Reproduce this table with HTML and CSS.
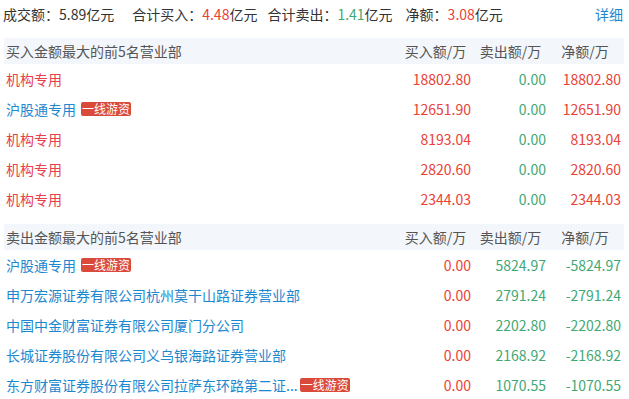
FILE: index.html
```html
<!DOCTYPE html>
<html lang="zh-CN">
<head>
<meta charset="utf-8">
<link rel="stylesheet" href="styles.css">
</head>
<body>
<div class="wrap">
  <div class="summary">
    <span class="item">成交额：5.89亿元</span>
    <span class="item">合计买入：<em class="up">4.48</em>亿元</span>
    <span class="item">合计卖出：<em class="down">1.41</em>亿元</span>
    <span class="item">净额：<em class="up">3.08</em>亿元</span>
    <a class="more">详细</a>
  </div>

  <table class="lhb">
    <colgroup><col><col class="c-num"><col class="c-num"><col class="c-net"></colgroup>
    <thead>
      <tr><th class="t-name">买入金额最大的前5名营业部</th><th>买入额/万</th><th>卖出额/万</th><th class="t-net">净额/万</th></tr>
    </thead>
    <tbody>
      <tr><td class="name inst">机构专用</td><td class="up">18802.80</td><td class="down">0.00</td><td class="up">18802.80</td></tr>
      <tr><td class="name"><span class="link">沪股通专用</span><span class="tag">一线游资</span></td><td class="up">12651.90</td><td class="down">0.00</td><td class="up">12651.90</td></tr>
      <tr><td class="name inst">机构专用</td><td class="up">8193.04</td><td class="down">0.00</td><td class="up">8193.04</td></tr>
      <tr><td class="name inst">机构专用</td><td class="up">2820.60</td><td class="down">0.00</td><td class="up">2820.60</td></tr>
      <tr><td class="name inst">机构专用</td><td class="up">2344.03</td><td class="down">0.00</td><td class="up">2344.03</td></tr>
    </tbody>
  </table>

  <table class="lhb second">
    <colgroup><col><col class="c-num"><col class="c-num"><col class="c-net"></colgroup>
    <thead>
      <tr><th class="t-name">卖出金额最大的前5名营业部</th><th>买入额/万</th><th>卖出额/万</th><th class="t-net">净额/万</th></tr>
    </thead>
    <tbody>
      <tr><td class="name"><span class="link">沪股通专用</span><span class="tag">一线游资</span></td><td class="up">0.00</td><td class="down">5824.97</td><td class="down">-5824.97</td></tr>
      <tr><td class="name"><span class="link">申万宏源证券有限公司杭州莫干山路证券营业部</span></td><td class="up">0.00</td><td class="down">2791.24</td><td class="down">-2791.24</td></tr>
      <tr><td class="name"><span class="link">中国中金财富证券有限公司厦门分公司</span></td><td class="up">0.00</td><td class="down">2202.80</td><td class="down">-2202.80</td></tr>
      <tr><td class="name"><span class="link">长城证券股份有限公司义乌银海路证券营业部</span></td><td class="up">0.00</td><td class="down">2168.92</td><td class="down">-2168.92</td></tr>
      <tr><td class="name"><span class="link">东方财富证券股份有限公司拉萨东环路第二证...</span><span class="tag tag-tight">一线游资</span></td><td class="up">0.00</td><td class="down">1070.55</td><td class="down">-1070.55</td></tr>
    </tbody>
  </table>
</div>
</body>
</html>
```
FILE: styles.css
```css
html, body {
  margin: 0;
  padding: 0;
  background: #fff;
}
body {
  font-family: "Microsoft YaHei", "Noto Sans CJK SC", sans-serif;
  font-size: 14px;
  color: #333;
}
.wrap {
  padding: 0 5px 0 4px;
}
.summary {
  display: flex;
  align-items: center;
  height: 28px;
  line-height: 28px;
  margin-left: -1px;
  margin-bottom: 10px;
  white-space: nowrap;
}
.summary .item:nth-child(1) {
  margin-right: 18px;
}
.summary .item:nth-child(2) {
  margin-right: 10px;
}
.summary .item:nth-child(3) {
  margin-right: 13px;
}
.summary em {
  font-style: normal;
}
.summary .more {
  margin-left: auto;
  margin-right: 1px;
  color: #1e88cf;
  cursor: pointer;
}
.lhb {
  width: 100%;
  border-collapse: collapse;
  table-layout: fixed;
}
.lhb.second {
  margin-top: 10px;
}
.c-num {
  width: 75px;
}
.c-net {
  width: 78px;
}
.lhb th {
  height: 26px;
  padding: 0 0 0 4px;
  background: #f3f6fa;
  font-weight: normal;
  color: #555;
  text-align: center;
  white-space: nowrap;
}
.lhb th.t-name {
  text-align: left;
  padding-left: 2px;
}
.lhb th.t-net {
  padding-left: 0;
}
.lhb td {
  height: 30px;
  padding: 0;
  text-align: right;
  white-space: nowrap;
}
.lhb td:last-child {
  padding-right: 3px;
}
.lhb td.name {
  text-align: left;
  padding-left: 2px;
  overflow: hidden;
}
.inst {
  color: #e8404a;
}
.link {
  color: #1e88cf;
}
.up {
  color: #ea4236;
}
.down {
  color: #3fa874;
}
.tag {
  display: inline-block;
  height: 14px;
  line-height: 14px;
  padding: 0 1px;
  margin-left: 5px;
  font-size: 12px;
  color: #fff;
  background: #d94a3b;
  border-radius: 2px;
  vertical-align: 1px;
}
.tag-tight {
  margin-left: 2px;
}
```
